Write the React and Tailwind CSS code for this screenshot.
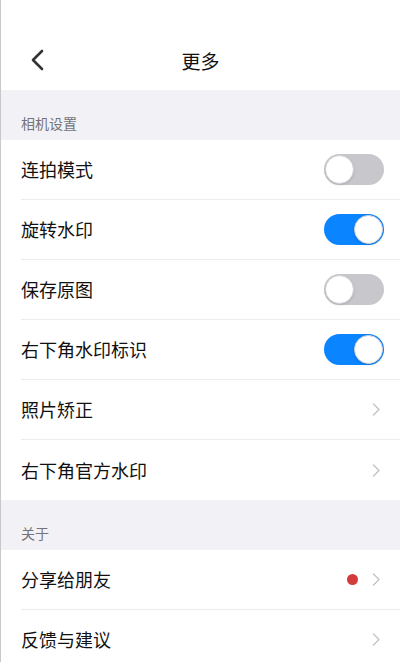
import React, { useState } from 'react';

const font = { fontFamily: '"Noto Sans CJK SC", "Noto Sans", sans-serif' };

const Toggle = ({ on, onChange }) => (
    <button
        onClick={onChange}
        className={`relative w-[60px] h-[31px] rounded-full transition-colors ${on ? 'bg-[#0a84ff]' : 'bg-[#c7c7cc]'}`}
    >
        <span
            className={`absolute top-px w-[29px] h-[29px] rounded-full bg-white border border-[#d0d0d4] shadow-sm transition-all ${on ? 'left-[30px] border-[#0a84ff]' : 'left-px'}`}
        />
    </button>
);

const Chevron = () => (
    <svg width="8" height="13" viewBox="0 0 8 13" fill="none" className="mr-1">
        <path d="M1.5 1l5.5 5.5-5.5 5.5" stroke="#c4c4c8" strokeWidth="1.4" strokeLinecap="round" strokeLinejoin="round" />
    </svg>
);

const Row = ({ label, last, children }) => (
    <div className="pl-5 bg-white">
        <div className={`h-[60px] flex items-center justify-between pr-4 ${last ? '' : 'border-b border-[#ececec]'}`}>
            <span className="text-[18px] text-[#111]">{label}</span>
            <div className="flex items-center gap-[14px]">{children}</div>
        </div>
    </div>
);

const SectionHeader = ({ title }) => (
    <div className="h-[50px] bg-[#f2f2f6] flex items-end pl-5 pb-[6px]">
        <span className="text-[14px] text-[#737378]">{title}</span>
    </div>
);

export default function App() {
    const [toggles, setToggles] = useState({ burst: false, rotate: true, save: false, mark: true });
    const flip = (k) => setToggles((t) => ({ ...t, [k]: !t[k] }));

    return (
        <div className="w-[400px] h-[662px] overflow-hidden bg-white border-l border-[#c8c8c8]" style={font}>
            {/* Nav bar */}
            <div className="h-[90px] relative flex items-end justify-center pb-[15px]">
                <button className="absolute left-[29px] top-[49px]">
                    <svg width="16" height="22" viewBox="0 0 16 22" fill="none">
                        <path d="M12 2L3 11l9 9" stroke="#333" strokeWidth="2.6" strokeLinecap="round" strokeLinejoin="round" />
                    </svg>
                </button>
                <h1 className="text-[19px] text-[#111]">更多</h1>
            </div>

            <SectionHeader title="相机设置" />
            <Row label="连拍模式"><Toggle on={toggles.burst} onChange={() => flip('burst')} /></Row>
            <Row label="旋转水印"><Toggle on={toggles.rotate} onChange={() => flip('rotate')} /></Row>
            <Row label="保存原图"><Toggle on={toggles.save} onChange={() => flip('save')} /></Row>
            <Row label="右下角水印标识"><Toggle on={toggles.mark} onChange={() => flip('mark')} /></Row>
            <Row label="照片矫正"><Chevron /></Row>
            <Row label="右下角官方水印" last><Chevron /></Row>

            <SectionHeader title="关于" />
            <Row label="分享给朋友">
                <span className="w-[11px] h-[11px] rounded-full bg-[#d43c3c]" />
                <Chevron />
            </Row>
            <Row label="反馈与建议"><Chevron /></Row>
        </div>
    );
}
